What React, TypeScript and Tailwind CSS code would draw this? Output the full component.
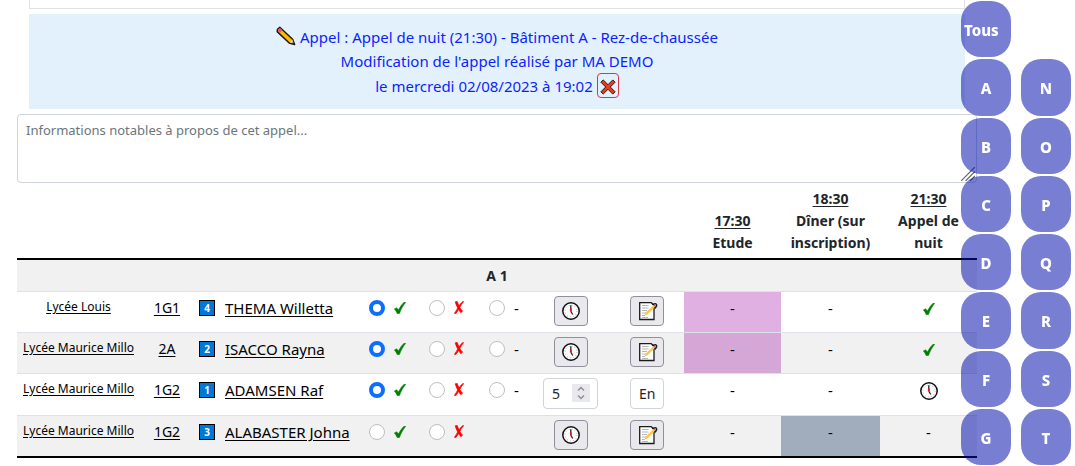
import React, { useState } from "react";

type Status = "present" | "absent" | "none";
type Mark = "check" | "clock" | "dash";

interface Student {
  id: number;
  school: string;
  group: string;
  room: string;
  name: string;
  status?: Status;
  choices: Status[];
  delay?: string;
  note?: string;
  study: string;
  dinner: string;
  night: Mark;
}

const students: Student[] = [
  { id: 1, school: "Lycée Louis", group: "1G1", room: "4", name: "THEMA Willetta", status: "present", choices: ["present", "absent", "none"], study: "bg-[#e1b0e2]", dinner: "", night: "check" },
  { id: 2, school: "Lycée Maurice Millo", group: "2A", room: "2", name: "ISACCO Rayna", status: "present", choices: ["present", "absent", "none"], study: "bg-[#d5a7d7]", dinner: "", night: "check" },
  { id: 3, school: "Lycée Maurice Millo", group: "1G2", room: "1", name: "ADAMSEN Raf", status: "present", choices: ["present", "absent", "none"], delay: "5", note: "En", study: "", dinner: "", night: "clock" },
  { id: 4, school: "Lycée Maurice Millo", group: "1G2", room: "3", name: "ALABASTER Johna", choices: ["present", "absent"], study: "", dinner: "bg-[#a1adbc]", night: "dash" },
];

const firstLetters = ["Tous", "A", "B", "C", "D", "E", "F", "G"];
const lastLetters = ["N", "O", "P", "Q", "R", "S", "T"];

const PencilIcon = () => (
  <svg viewBox="0 0 20 20" className="inline-block size-5 align-[-3px]" aria-hidden="true">
    <path d="M1.5 3.4 3.8 1.3 16.6 13.2 18.6 18.6 13.2 17 1.2 5.6Z" fill="#ffb900" stroke="#1b1b1b" strokeWidth="1.5" strokeLinejoin="round" />
    <path d="M2.1 3.6 4 1.9 6.4 4.2 4.2 6.6 2 5Z" fill="#e8596c" />
    <path d="m13.6 16.3 2.7-2.7 1.5 4.1Z" fill="#f3c9a0" />
    <path d="m16.9 16.2 1.9 2.4-2.8-.8Z" fill="#1b1b1b" />
  </svg>
);

const CrossIcon = () => (
  <svg viewBox="0 0 16 16" className="mt-0.5 size-4" aria-hidden="true">
    <path d="M3.2.9 8 5.7 12.8.9l2.3 2.3L10.3 8l4.8 4.8-2.3 2.3L8 10.3l-4.8 4.8-2.3-2.3L5.7 8 .9 3.2Z" fill="#f03a17" stroke="#1b1b1b" strokeWidth="1" />
  </svg>
);

const ClockIcon = () => (
  <svg viewBox="0 0 18 18" className="inline-block size-[18px] align-[-4px]" aria-hidden="true">
    <circle cx="9" cy="9" r="8.2" fill="#fff" stroke="#111" strokeWidth="1.5" />
    <circle cx="9" cy="9" r="6" fill="none" stroke="#aaa" strokeWidth="1" strokeDasharray="1 2.14" />
    <path d="M8.8 3.2V9" stroke="#222" strokeWidth="1.3" />
    <path d="M8.8 6.5V9.5" stroke="#e81123" strokeWidth="1.8" />
    <path d="m8.8 9.3 2 3.2" stroke="#4a1a1a" strokeWidth="1.3" />
  </svg>
);

const NoteIcon = () => (
  <svg viewBox="0 0 20 20" className="ml-0.5 size-5" aria-hidden="true">
    <path d="M1.7 1.7h11.5l2.8 2.3v14.5H1.7Z" fill="#fff" stroke="#1b1b1b" strokeWidth="1.3" />
    <path d="M4 4.5h6.5M4 7h6.5M4 9.5h5M4 12h4M4 14.5h3M4 16.5h6" stroke="#b5b5b5" strokeWidth="1" />
    <path d="m6.5 14.4 1.2-3L15.8 4l1.6 1.6-8 7.8Z" fill="#fcc74a" />
    <path d="M14 3.6c1.6-.2 3.2-1.5 4.3-.4s-.2 2.8-1.7 4.2" fill="none" stroke="#1b1b1b" strokeWidth="1.5" />
    <path d="m16 5 1.8-1.6" stroke="#e8596c" strokeWidth="1.3" />
  </svg>
);

const CheckIcon = () => (
  <svg viewBox="0 0 12 12" className="inline-block size-3" aria-hidden="true">
    <path d="M.3 6.9 2.8 5.8 4.3 8.1C6 5 7.8 2.3 10 .2L11.8.2C9 3.500 7.200 7 5.500 11.500l-2.200.3C2.500 9.800 1.600 8.200.3 6.900Z" fill="#008000" stroke="#008000" strokeWidth=".5" />
  </svg>
);

const AbsentIcon = () => (
  <svg viewBox="0 0 10 13" className="h-[13px] w-2.5" aria-hidden="true">
    <path
      d="M1.200.8 3.300.5c.5 1.500 1 2.900 1.700 4.300C6.200 3 7.600 1.300 9.300.2l.3.500C8 2.500 6.800 4.300 5.800 6.400c.8 1.400 1.700 2.600 2.800 3.600l-1.700 1.800C6 10.700 5.300 9.600 4.600 8.500 3.700 10 2.800 11.400 1.600 12.700L.4 12.300C1.800 10.500 2.800 8.700 3.700 6.900 2.600 5 1.700 2.900 1.200.8Z"
      fill="#ff0000"
      stroke="#ff0000"
      strokeWidth=".7"
    />
  </svg>
);

const statusSigns: Record<Status, React.ReactNode> = {
  present: <CheckIcon />,
  absent: <AbsentIcon />,
  none: <span>-</span>,
};

const statusLabels: Record<Status, string> = {
  present: "Présent",
  absent: "Absent",
  none: "Non renseigné",
};

const nightMarks: Record<Mark, React.ReactNode> = {
  check: <CheckIcon />,
  clock: <ClockIcon />,
  dash: "-",
};

const IconButton: React.FC<{ label: string; children: React.ReactNode }> = ({ label, children }) => (
  <button
    type="button"
    aria-label={label}
    className="mx-auto flex h-[30px] w-[34px] items-center justify-center rounded-sm border border-[#8f8f9d] bg-[#e9e9ed] hover:bg-[#d0d0d7]"
  >
    {children}
  </button>
);

const LetterButton: React.FC<{ letter: string }> = ({ letter }) => (
  <button
    type="button"
    className={`w-full flex-1 basis-0 rounded-[20px] bg-[#000baa]/53 pt-0.5 text-[15px] font-extrabold text-white hover:bg-[#000baa]/75 ${
      letter === "Tous" ? "pl-[3px] text-left" : "text-center"
    }`}
  >
    {letter}
  </button>
);

const StudentRow: React.FC<{ student: Student }> = ({ student }) => {
  const [status, setStatus] = useState<Status | undefined>(student.status);
  const [delay, setDelay] = useState(student.delay ?? "");
  const [note, setNote] = useState(student.note ?? "");

  return (
    <tr className="border-t border-[#dee2e6] even:bg-[#f1f1f1] [&>td]:pt-1 [&>td]:pb-1.5 [&>td]:align-top">
      <td className="text-center text-xs leading-[22px]">
        <a href="#" className="underline underline-offset-2">{student.school}</a>
      </td>
      <td className="text-center text-sm leading-6">
        <a href="#" className="underline underline-offset-2">{student.group}</a>
      </td>
      <td className="whitespace-nowrap">
        <div className="flex items-center gap-2.5 pl-[5px]">
          <span className="flex size-4 items-center justify-center border border-black bg-[#0078d7] text-[10px] leading-none font-bold text-white">
            {student.room}
          </span>
          <a href="#" className="text-[15px] leading-6 underline underline-offset-2">{student.name}</a>
        </div>
      </td>
      {(["present", "absent", "none"] as Status[]).map((choice) => (
        <td key={choice}>
          {student.choices.includes(choice) && (
            <label className="flex h-6 items-center gap-[9px] pl-2">
              <input
                type="radio"
                name={`status-${student.id}`}
                aria-label={statusLabels[choice]}
                checked={status === choice}
                onChange={() => setStatus(choice)}
                className="size-4 shrink-0 appearance-none rounded-full border border-[#bfbfbf] bg-white checked:border-4 checked:border-[#0d6efd]"
              />
              {statusSigns[choice]}
            </label>
          )}
        </td>
      ))}
      <td>
        {student.delay ? (
          <div className="relative mx-auto w-[55px]">
            <input
              type="number"
              aria-label="Minutes de retard"
              value={delay}
              onChange={(e) => setDelay(e.target.value)}
              className="block h-[31px] w-full [appearance:textfield] rounded-sm border border-[#ced4da] bg-white px-2 text-sm text-[#212529] [&::-webkit-inner-spin-button]:appearance-none"
            />
            <svg viewBox="0 0 18 18" className="pointer-events-none absolute top-1.5 right-2 size-[18px] bg-[#e9e9ed]" aria-hidden="true">
              <path d="m6 6.5 3-3 3 3M6 11.5l3 3 3-3" fill="none" stroke="#8f8f9d" strokeWidth="1.5" />
            </svg>
          </div>
        ) : (
          <IconButton label="Retard">
            <ClockIcon />
          </IconButton>
        )}
      </td>
      <td className="pl-0.5">
        {student.note ? (
          <input
            type="text"
            aria-label="Remarque"
            value={note}
            onChange={(e) => setNote(e.target.value)}
            className="mx-auto block h-[31px] w-[34px] rounded-sm border border-[#ced4da] bg-white pl-2 text-sm text-[#212529]"
          />
        ) : (
          <IconButton label="Remarque">
            <NoteIcon />
          </IconButton>
        )}
      </td>
      <td className={`text-center ${student.study}`}>-</td>
      <td className={`text-center ${student.dinner}`}>-</td>
      <td className="text-center">{nightMarks[student.night]}</td>
    </tr>
  );
};

const App: React.FC = () => {
  const [info, setInfo] = useState("");

  return (
    <div className="min-h-screen bg-white font-['Noto_Sans',sans-serif] text-[15px] leading-6 text-black">
      <main className="mr-[98px] ml-[17px]">
        {/* End of the filter box above the roll call */}
        <div className="mx-3 h-[9px] border-x border-b border-[#dee2e6]" />

        <section className="mx-3 mt-[5px] h-[95px] bg-[#e3f1fd] pt-[11px] text-center text-[#0d1fff]">
          <p>
            <PencilIcon /> Appel : Appel de nuit (21:30) - Bâtiment A - Rez-de-chaussée
          </p>
          <p>Modification de l'appel réalisé par MA DEMO</p>
          <p className="flex items-center justify-center gap-1">
            le mercredi 02/08/2023 à 19:02
            <button
              type="button"
              aria-label="Annuler la modification"
              className="flex h-[25px] w-[22px] items-center justify-center rounded-sm border border-[#dc3545]"
            >
              <CrossIcon />
            </button>
          </p>
        </section>

        <div className="relative mt-[5px]">
          <textarea
            aria-label="Informations notables"
            placeholder="Informations notables à propos de cet appel..."
            value={info}
            onChange={(e) => setInfo(e.target.value)}
            className="block h-[69px] w-full resize-none rounded-sm border border-[#ced4da] bg-white px-2 py-1 text-[13px] leading-[22px] placeholder:text-[#6c757d]"
          />
          <svg viewBox="0 0 14 14" className="pointer-events-none absolute right-0.5 bottom-0.5 size-3.5" aria-hidden="true">
            <path d="M0 14 14 0M4.5 14 14 4.5M9 14l5-5" stroke="#666" strokeWidth="1.2" />
          </svg>
        </div>

        <table className="mt-px w-full table-fixed border-collapse border-b-2 border-black">
          <colgroup>
            <col className="w-[123px]" />
            <col className="w-[54px]" />
            <col />
            <col className="w-[60px]" />
            <col className="w-[60px]" />
            <col className="w-[52px]" />
            <col className="w-[75px]" />
            <col className="w-[76px]" />
            <col className="w-[97px]" />
            <col className="w-[99px]" />
            <col className="w-[97px]" />
          </colgroup>
          <thead>
            <tr className="text-sm leading-[22px] text-[#212529] [&>th]:px-1 [&>th]:py-1 [&>th]:align-bottom">
              <th colSpan={8} />
              <th>
                <span className="underline underline-offset-2">17:30</span>
                <br />
                Etude
              </th>
              <th>
                <span className="underline underline-offset-2">18:30</span>
                <br />
                Dîner (sur inscription)
              </th>
              <th>
                <span className="underline underline-offset-2">21:30</span>
                <br />
                Appel de nuit
              </th>
            </tr>
          </thead>
          <tbody className="border-t-2 border-black">
            <tr className="bg-[#f1f1f1]">
              <th colSpan={11} className="h-8 pt-0.5 text-sm text-[#212529]">A 1</th>
            </tr>
          </tbody>
          <tbody>
            {students.map((student) => (
              <StudentRow key={student.id} student={student} />
            ))}
          </tbody>
        </table>
      </main>

      {/* Alphabet shortcuts */}
      <nav aria-label="Filtrer par initiale" className="fixed inset-y-0 right-1 grid grid-cols-[50px_50px] gap-2.5 py-px">
        <div className="flex flex-col gap-0.5">
          {firstLetters.map((letter) => (
            <LetterButton key={letter} letter={letter} />
          ))}
        </div>
        <div className="flex flex-col gap-0.5">
          <span className="flex-1 basis-0 pt-0.5" />
          {lastLetters.map((letter) => (
            <LetterButton key={letter} letter={letter} />
          ))}
        </div>
      </nav>
    </div>
  );
};

export default App;
